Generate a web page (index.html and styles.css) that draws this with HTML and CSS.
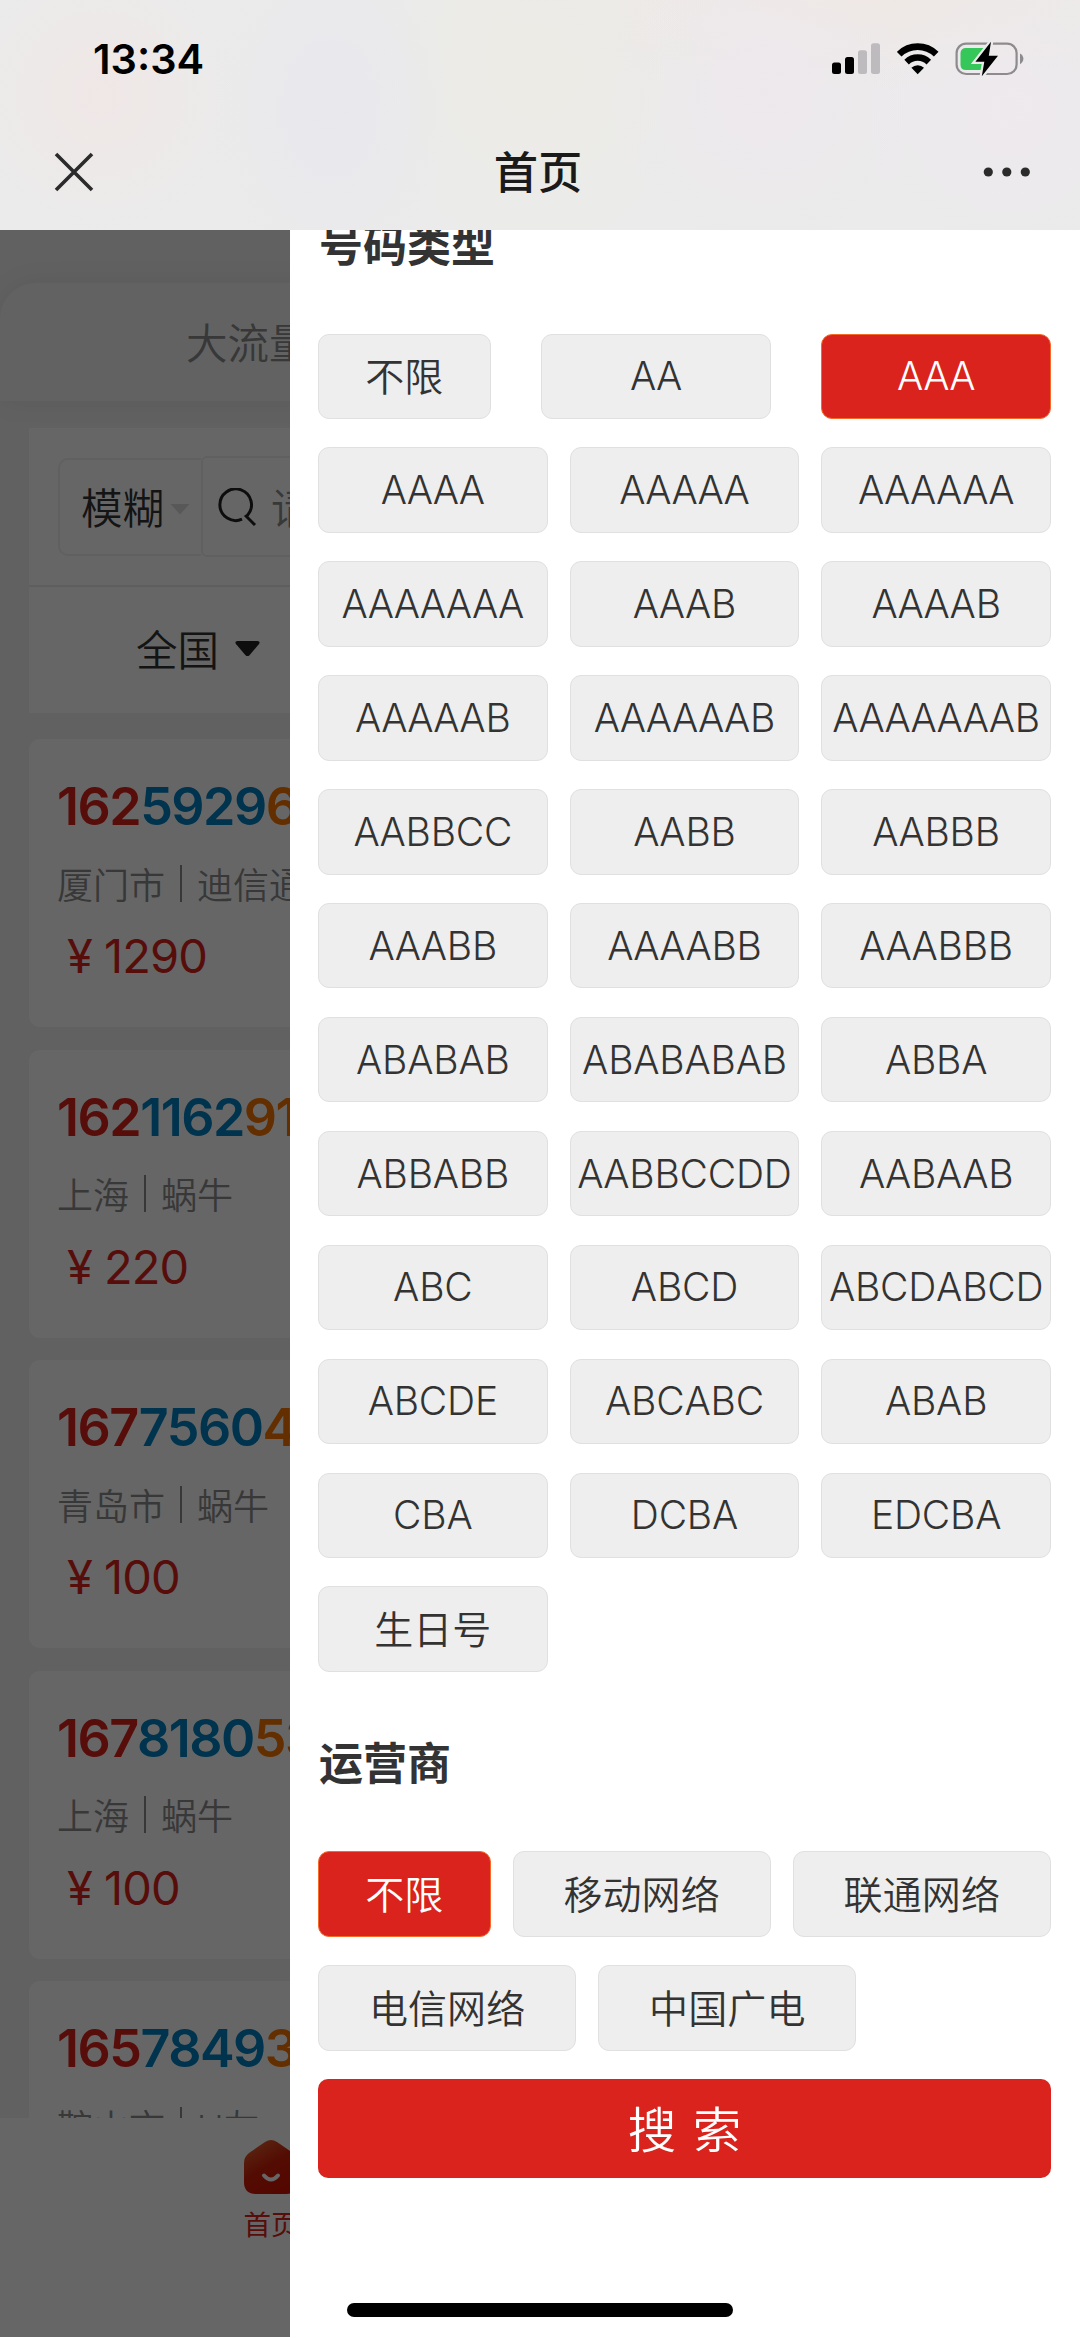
FILE: index.html
```html
<!DOCTYPE html>
<html lang="zh-CN">
<head>
  <meta charset="UTF-8">
  <meta name="viewport" content="width=device-width, initial-scale=1">
  <title>首页</title>
  <link rel="stylesheet" href="styles.css">
</head>
<body>
<div class="screen">

  <header class="nav">
    <div class="status">
      <span class="status__time">13:34</span>
      <div class="status__icons">
        <svg class="icon-signal" width="49" height="32" viewBox="0 0 49 32">
          <rect x="0" y="19.5" width="9" height="11.5" rx="2.5"/>
          <rect x="13" y="14" width="9" height="17" rx="2.5"/>
          <rect class="off" x="26" y="7.3" width="9" height="23.7" rx="2.5"/>
          <rect class="off" x="39" y="0.3" width="9" height="30.7" rx="2.5"/>
        </svg>
        <svg class="icon-wifi" width="42" height="32" viewBox="0 0 42 32">
          <path d="M2.2 11.2A26.5 26.5 0 0 1 39.2 11.2" fill="none" stroke="#000" stroke-width="6.6"/>
          <path d="M9.6 19.1A15.8 15.8 0 0 1 31.8 19.1" fill="none" stroke="#000" stroke-width="6.4"/>
          <path d="M20.7 31.2L14.4 24.8A9 9 0 0 1 27 24.8Z"/>
        </svg>
        <svg class="icon-battery" width="70" height="36" viewBox="0 0 70 36">
          <rect x="1.6" y="2.6" width="60" height="30.4" rx="9.5" fill="none" stroke="#8e8b8e" stroke-width="2.2"/>
          <path d="M65 12.5Q68.4 14.5 68.4 17.8Q68.4 21.2 65 23.2Z" fill="#8e8b8e"/>
          <path d="M11 7H31V29H11Q5.5 29 5.5 23.5V12.5Q5.5 7 11 7Z" fill="#35c759"/>
          <path d="M36 .8L20.4 20.8H29.3L26.8 35.2L43 14.8H33.8Z" fill="#000" stroke="#edeaec" stroke-width="4.5" paint-order="stroke"/>
        </svg>
      </div>
    </div>
    <div class="titlebar">
      <svg class="icon-close" width="40" height="40" viewBox="0 0 40 40">
        <path d="M2 2L38 38M38 2L2 38"/>
      </svg>
      <h1 class="titlebar__text">首页</h1>
      <svg class="icon-more" width="50" height="12" viewBox="0 0 50 12">
        <circle cx="6.3" cy="6" r="4.6"/><circle cx="24.8" cy="6" r="4.6"/><circle cx="43.3" cy="6" r="4.6"/>
      </svg>
    </div>
  </header>

  <main class="page">
    <div class="tabs"><span class="tabs__item">大流量</span></div>

    <section class="filter">
      <div class="filter__search">
        <div class="filter__mode">模糊<i class="caret"></i></div>
        <div class="filter__input">
          <svg width="40" height="40" viewBox="0 0 40 40">
            <path d="M24 31.2A15.8 15.8 0 1 1 29.5 27.2L28.2 28.2L37 37" />
          </svg>
          <span>请</span>
        </div>
      </div>
      <div class="filter__area">全国
        <svg width="26" height="17" viewBox="0 0 26 17"><path d="M2.5 0H22.5Q26 .5 23.8 3.2L14.5 14.2Q12.5 16 10.5 14.2L1.2 3.2Q-1 .5 2.5 0Z"/></svg>
      </div>
    </section>

    <section class="cards">
      <article class="card">
        <div class="card__number"><b>162</b><b class="mid">5929</b><b class="end">6</b></div>
        <div class="card__info">厦门市<i></i>迪信通</div>
        <div class="card__price"><span>¥</span>1290</div>
      </article>
      <article class="card">
        <div class="card__number"><b>162</b><b class="mid">1162</b><b class="end">91</b></div>
        <div class="card__info">上海<i></i>蜗牛</div>
        <div class="card__price"><span>¥</span>220</div>
      </article>
      <article class="card">
        <div class="card__number"><b>167</b><b class="mid">7560</b><b class="end">4</b></div>
        <div class="card__info">青岛市<i></i>蜗牛</div>
        <div class="card__price"><span>¥</span>100</div>
      </article>
      <article class="card">
        <div class="card__number"><b>167</b><b class="mid">8180</b><b class="end">53</b></div>
        <div class="card__info">上海<i></i>蜗牛</div>
        <div class="card__price"><span>¥</span>100</div>
      </article>
      <article class="card">
        <div class="card__number"><b>165</b><b class="mid">7849</b><b class="end">3</b></div>
        <div class="card__info">鞍山市<i></i>U友</div>
      </article>
    </section>

    <nav class="tabbar">
      <div class="tabbar__item">
        <svg width="56" height="56" viewBox="0 0 56 56">
          <defs>
            <linearGradient id="home" x1="0" y1="0" x2=".6" y2="1">
              <stop offset=".1" stop-color="#e0602e"/>
              <stop offset=".55" stop-color="#cf1f08"/>
              <stop offset="1" stop-color="#cf1200"/>
            </linearGradient>
          </defs>
          <path d="M22 3Q28-1 34 3L50 14Q55 18 55 24V43Q55 55 43 55H13Q1 55 1 43V24Q1 18 6 14Z" fill="url(#home)"/>
          <path d="M21 36.5Q28 44.5 35 36.5" fill="none" stroke="#fff" stroke-width="4" stroke-linecap="round"/>
        </svg>
        <span>首页</span>
      </div>
    </nav>
  </main>

  <div class="mask"></div>

  <aside class="drawer">
    <h2 class="drawer__title">号码类型</h2>
    <div class="chips chips--first">
      <button class="chip chip--short">不限</button>
      <button class="chip">AA</button>
      <button class="chip chip--active">AAA</button>
    </div>
    <div class="chips chips--grid">
      <button class="chip">AAAA</button>
      <button class="chip">AAAAA</button>
      <button class="chip">AAAAAA</button>
      <button class="chip">AAAAAAA</button>
      <button class="chip">AAAB</button>
      <button class="chip">AAAAB</button>
      <button class="chip">AAAAAB</button>
      <button class="chip">AAAAAAB</button>
      <button class="chip">AAAAAAAB</button>
      <button class="chip">AABBCC</button>
      <button class="chip">AABB</button>
      <button class="chip">AABBB</button>
      <button class="chip">AAABB</button>
      <button class="chip">AAAABB</button>
      <button class="chip">AAABBB</button>
      <button class="chip">ABABAB</button>
      <button class="chip">ABABABAB</button>
      <button class="chip">ABBA</button>
      <button class="chip">ABBABB</button>
      <button class="chip">AABBCCDD</button>
      <button class="chip">AABAAB</button>
      <button class="chip">ABC</button>
      <button class="chip">ABCD</button>
      <button class="chip">ABCDABCD</button>
      <button class="chip">ABCDE</button>
      <button class="chip">ABCABC</button>
      <button class="chip">ABAB</button>
      <button class="chip">CBA</button>
      <button class="chip">DCBA</button>
      <button class="chip">EDCBA</button>
      <button class="chip chip--cjk">生日号</button>
    </div>

    <h2 class="drawer__title drawer__title--carrier">运营商</h2>
    <div class="chips chips--carrier">
      <button class="chip chip--short chip--active">不限</button>
      <button class="chip">移动网络</button>
      <button class="chip">联通网络</button>
      <button class="chip">电信网络</button>
      <button class="chip">中国广电</button>
    </div>
    <button class="submit">搜 索</button>
  </aside>

  <div class="home-indicator"></div>
</div>
</body>
</html>
```

FILE: styles.css
```css
* {
  margin: 0;
  padding: 0;
  box-sizing: border-box;
}

:root {
  --red: #d9231c;
  --blue: #0081c0;
  --orange: #f97500;
  --text: #333;
  --gray: #8c8c8c;
}

body {
  font-family: Inter, "Noto Sans CJK SC", sans-serif;
  color: var(--text);
}

button {
  font-family: inherit;
}

.screen {
  position: relative;
  width: 1080px;
  height: 2338px;
  overflow: hidden;
  display: flex;
  flex-direction: column;
  background: #fff;
}

/* top bar */
.nav {
  height: 230px;
  flex: none;
  background:
    radial-gradient(circle at 100px 95px, rgba(241, 230, 229, .8), rgba(239, 233, 232, 0) 140px),
    radial-gradient(ellipse 120px 180px at 330px 110px, rgba(232, 231, 237, .9), rgba(234, 233, 237, 0)),
    radial-gradient(ellipse 160px 190px at 535px 60px, rgba(237, 235, 229, 1), rgba(236, 235, 232, 0)),
    radial-gradient(circle at 765px 95px, rgba(238, 232, 237, .9), rgba(237, 233, 236, 0) 160px),
    radial-gradient(circle at 1010px 110px, rgba(238, 233, 238, .9), rgba(237, 234, 237, 0) 150px),
    radial-gradient(ellipse 380px 90px at 860px 0, rgba(239, 232, 229, 1), rgba(237, 234, 232, 0)),
    #ebebeb;
}

.status {
  height: 118px;
  padding: 0 55px 0 93px;
  display: flex;
  align-items: center;
  justify-content: space-between;
}

.status__time {
  font-size: 41.5px;
  font-weight: 600;
  color: #000;
}

.status__icons {
  display: flex;
  align-items: center;
  gap: 16px;
}

.icon-signal .off {
  fill: #bdbbbd;
}

.titlebar {
  height: 108px;
  padding: 0 48px 0 54px;
  display: flex;
  align-items: center;
  justify-content: space-between;
}

.titlebar__text {
  padding-bottom: 5px;
  font-size: 44.3px;
  font-weight: 500;
  color: #1a1a1a;
}

.icon-close {
  stroke: #2b2b2b;
  stroke-width: 3.6;
}

.icon-more {
  fill: #2b2b2b;
}

/* page under the mask */
.page {
  height: 2107px;
  overflow: hidden;
  display: flex;
  flex-direction: column;
  background: #f2f2f2;
}

.tabs {
  flex: none;
  height: 118px;
  margin-top: 53px;
  padding-left: 186px;
  line-height: 122px;
  border-radius: 36px 36px 0 0;
  background: #f6f6f6;
  box-shadow: 0 0 28px rgba(0, 0, 0, .07);
  font-size: 41.5px;
  font-weight: 350;
  color: var(--gray);
}

.filter {
  flex: none;
  height: 285px;
  margin: 27px 29px 0;
  background: #fff;
}

.filter__search {
  height: 159px;
  padding: 0 29px;
  display: flex;
  align-items: center;
  border-bottom: 2px solid #eaeaea;
  font-size: 41.5px;
  font-weight: 350;
}

.filter__mode {
  width: 143px;
  height: 98px;
  padding: 0 0 2px 21px;
  display: flex;
  align-items: center;
  gap: 6px;
  border: 2px solid #f0f0f0;
  border-right: 0;
  border-radius: 10px 0 0 10px;
}

.caret {
  width: 20px;
  height: 11px;
  margin-top: 7px;
  clip-path: polygon(0 0, 100% 0, 50% 100%);
  background: #ddd;
}

.filter__input {
  flex: 1;
  height: 101px;
  padding: 0 0 2px 15px;
  display: flex;
  align-items: center;
  gap: 13px;
  border: 2px solid #f0f0f0;
  border-radius: 6px;
  color: var(--gray);
}

.filter__input svg {
  flex: none;
  margin-top: 4px;
  fill: none;
  stroke: #222;
  stroke-width: 3;
}

.filter__area {
  height: 126px;
  padding: 0 0 5px 107px;
  display: flex;
  align-items: center;
  gap: 16px;
  font-size: 41.5px;
  font-weight: 350;
}

.filter__area svg {
  margin-top: 3px;
  fill: #222;
}

.cards {
  flex: 1;
  min-height: 0;
  overflow: hidden;
  padding: 26px 29px 0;
  display: flex;
  flex-direction: column;
  gap: 22.5px;
}

.card {
  flex: none;
  height: 288px;
  padding: 33px 29px 0 28px;
  border-radius: 11px;
  background: #fff;
}

.card__number {
  height: 70px;
  line-height: 70px;
  font-size: 52px;
  letter-spacing: -1.5px;
  color: var(--red);
}

.card__number b {
  font-weight: 600;
}

.card__number .mid {
  color: var(--blue);
}

.card__number .end {
  color: var(--orange);
}

.card__info {
  height: 84px;
  padding-bottom: 3px;
  display: flex;
  align-items: center;
  font-size: 36px;
  font-weight: 350;
  color: var(--gray);
}

.card__info i {
  width: 2px;
  height: 37px;
  margin: 1px 15px 0;
  background: var(--gray);
}

.card__price {
  padding-left: 10px;
  display: flex;
  line-height: 60px;
  font-size: 47px;
  font-weight: 380;
  letter-spacing: -.9px;
  color: var(--red);
}

.card__price span {
  width: 37px;
}

.tabbar {
  flex: none;
  height: 219px;
  padding: 21px 0 0 243px;
  background: #fff;
}

.tabbar__item {
  width: 56px;
  display: flex;
  flex-direction: column;
  align-items: center;
  gap: 10px;
  font-size: 27.5px;
  line-height: 40px;
  color: var(--red);
}

.mask {
  position: absolute;
  inset: 230px 0 1px;
  background: rgba(0, 0, 0, .6);
}

/* filter drawer, scrolled a little so its first title slides under the top bar */
.drawer {
  position: absolute;
  top: 230px;
  right: 0;
  bottom: 0;
  width: 790px;
  padding: 0 29px 0 28px;
  overflow: hidden;
  background: #fff;
}

.drawer__title {
  height: 179.6px;
  padding-left: 1px;
  line-height: 184px;
  font-size: 44px;
  font-weight: 700;
}

.drawer__title--carrier {
  line-height: 185px;
}

.drawer__title:first-child {
  margin-top: -76px;
}

.chips {
  display: flex;
  gap: 28.5px 22px;
}

.chips--first {
  justify-content: space-between;
  margin-bottom: 28.5px;
}

.chips--grid {
  display: grid;
  grid-template-columns: repeat(3, 1fr);
}

.chips--carrier {
  flex-wrap: wrap;
}

.chip {
  width: 229.6px;
  height: 85.4px;
  padding-bottom: 1px;
  border: 1px solid #e0e0e0;
  border-radius: 11px;
  background: #eee;
  font-size: 39px;
  font-weight: 300;
  font-kerning: none;
  letter-spacing: -.2px;
  white-space: nowrap;
  color: var(--text);
}

.chips--carrier .chip,
.chips .chip--short,
.chip--cjk {
  padding-bottom: 4px;
  font-weight: 350;
  letter-spacing: .1px;
}

.chips--carrier .chip {
  width: 258.2px;
}

.chips .chip--short {
  width: 172.5px;
}

.chip--active {
  border-color: #f5692a;
  background: var(--red);
  color: #fff;
}

.submit {
  display: block;
  width: 100%;
  height: 99px;
  margin-top: 28px;
  padding-bottom: 2px;
  border: 0;
  border-radius: 10px;
  background: var(--red);
  font-size: 48.5px;
  font-weight: 350;
  word-spacing: 3px;
  color: #fff;
}

.home-indicator {
  position: absolute;
  left: 347px;
  bottom: 21px;
  width: 386px;
  height: 14px;
  border-radius: 7px;
  background: #000;
}
```
